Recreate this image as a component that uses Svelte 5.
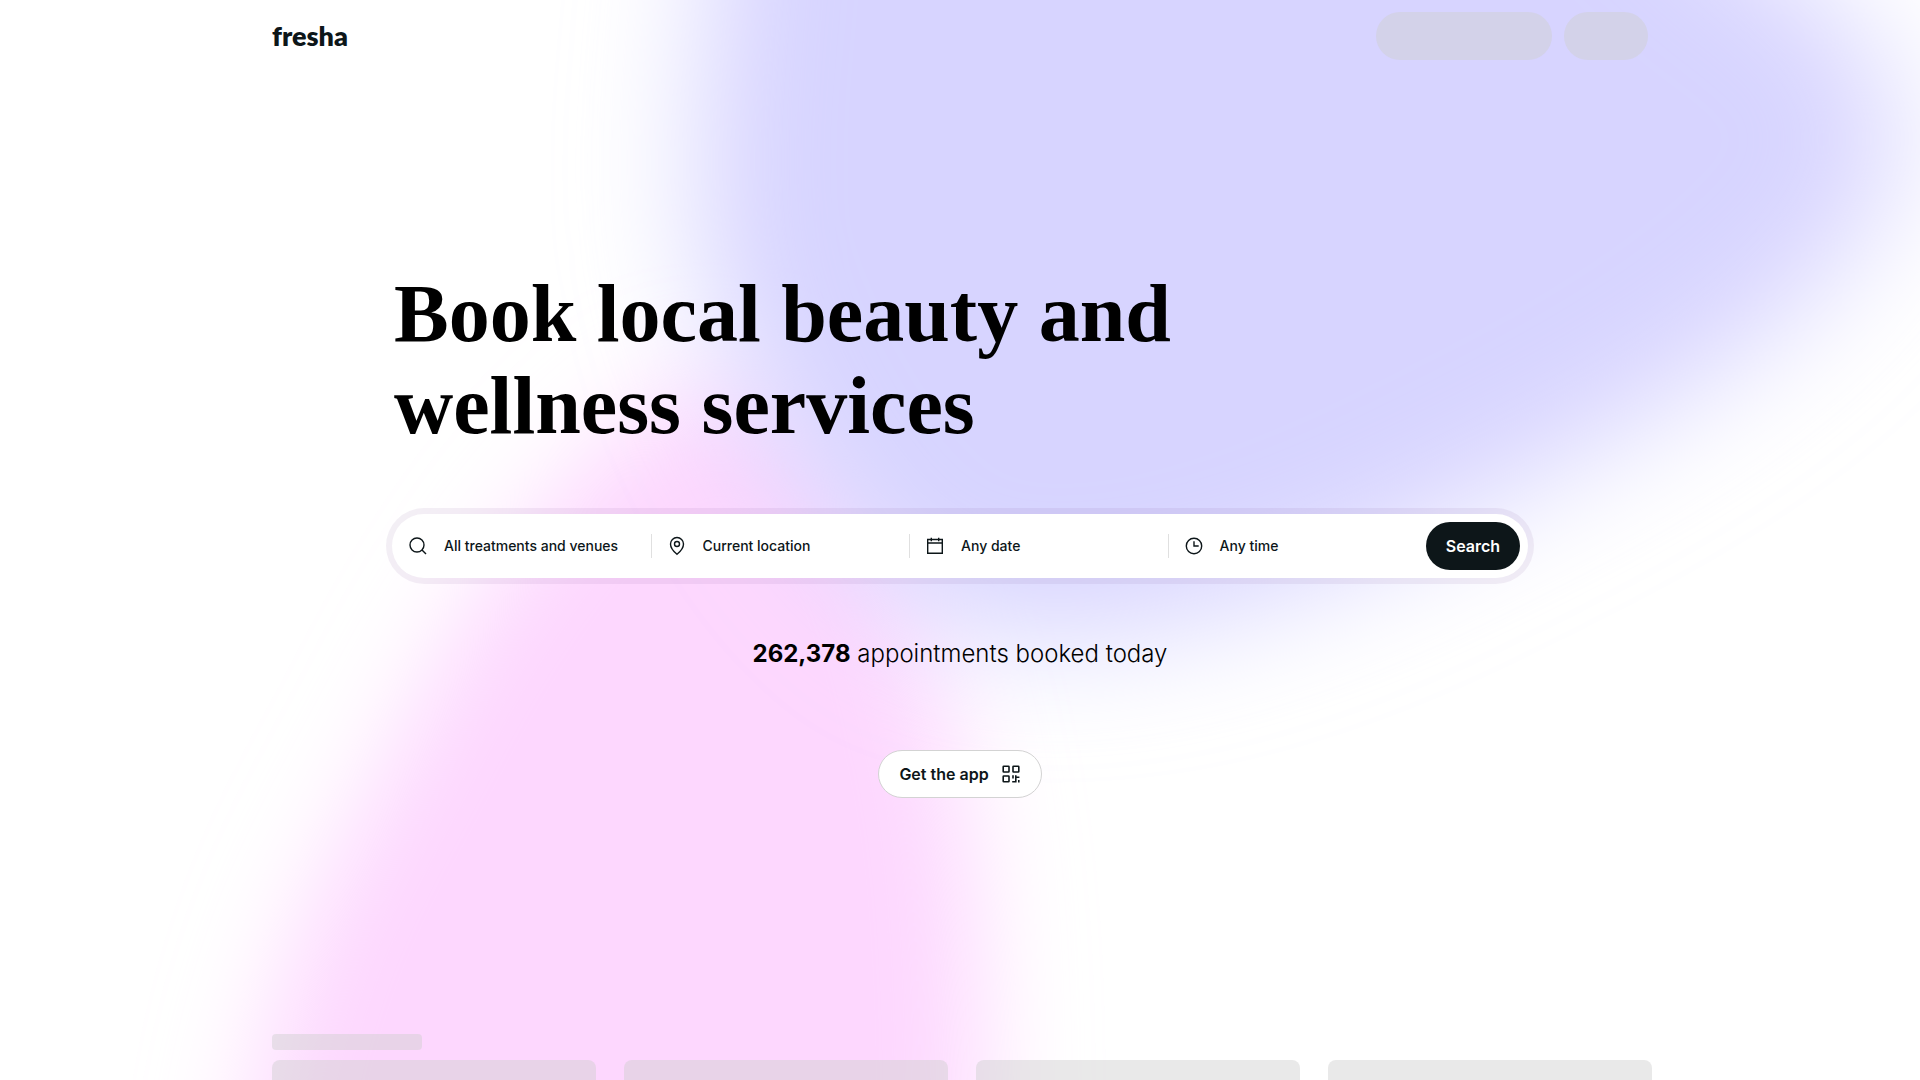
<script lang="ts">
  let treatment = $state('');
  let location = $state('');

  const appointments = 262378;
  const cards = [1, 2, 3, 4];
</script>

<div class="page">
  <svg class="backdrop" viewBox="0 0 1920 1080" preserveAspectRatio="none" aria-hidden="true">
    <defs>
      <filter id="soft" x="-30%" y="-30%" width="160%" height="160%">
        <feGaussianBlur stdDeviation="52" />
      </filter>
      <filter id="softer" x="-30%" y="-30%" width="160%" height="160%">
        <feGaussianBlur stdDeviation="62" />
      </filter>
    </defs>
    <path
      fill="#fdd7fe"
      filter="url(#soft)"
      d="M700 380C610 410 490 560 410 720C340 860 250 960 235 1300L980 1300C982 1100 985 900 955 760C920 620 880 380 700 380Z"
    />
    <path
      fill="#d7d4ff"
      filter="url(#softer)"
      d="M725 -200C720 0 670 200 722 330C765 440 820 550 930 620C1100 670 1300 600 1490 500C1700 400 1880 270 1900 150C1900 70 1850 10 1740 -60L1600 -200Z"
    />
  </svg>

  <header class="header">
    <a class="logo" href="/">fresha</a>
    <div class="header-actions">
      <span class="bone pill wide"></span>
      <span class="bone pill"></span>
    </div>
  </header>

  <main class="hero">
    <h1>Book local beauty and<br />wellness services</h1>

    <form class="search" onsubmit={(e) => e.preventDefault()}>
      <label class="field">
        <svg viewBox="0 0 20 20" aria-hidden="true">
          <circle cx="9" cy="9" r="7" />
          <path d="M14 14L18 18" />
        </svg>
        <input type="text" aria-label="Treatment or venue" placeholder="All treatments and venues" bind:value={treatment} />
      </label>
      <label class="field">
        <svg viewBox="0 0 20 20" aria-hidden="true">
          <circle cx="10" cy="8" r="2.5" />
          <path d="M16.5 8C16.5 13 10 18.3 10 18.3S3.5 13 3.5 8a6.5 6.5 0 0 1 13 0Z" />
        </svg>
        <input type="text" aria-label="Location" placeholder="Current location" bind:value={location} />
      </label>
      <button class="field" type="button">
        <svg viewBox="0 0 20 20" aria-hidden="true">
          <path d="M2.7 3.5h14.6v13.8H2.7ZM2.7 7h14.6M6.3 1.7v3.6M13.7 1.7v3.6" />
        </svg>
        <span>Any date</span>
      </button>
      <button class="field" type="button">
        <svg viewBox="0 0 20 20" aria-hidden="true">
          <circle cx="10" cy="10" r="7.7" />
          <path d="M10 5.3V10h4.7" />
        </svg>
        <span>Any time</span>
      </button>
      <button class="submit" type="submit">Search</button>
    </form>

    <p class="count"><strong>{appointments.toLocaleString('en-US')}</strong> appointments booked today</p>

    <button class="get-app" type="button">
      Get the app
      <svg viewBox="0 0 20 20" aria-hidden="true">
        <rect x="2.2" y="2.2" width="5.8" height="5.8" rx="0.6" />
        <rect x="12" y="2.2" width="5.8" height="5.8" rx="0.6" />
        <rect x="2.2" y="12" width="5.8" height="5.8" rx="0.6" />
        <path d="M12 11.2v3.4M11.2 17.8H14.8V11.2M14.8 13.2H18.4M17.8 16v2.4" />
      </svg>
    </button>
  </main>

  <section class="venues" aria-busy="true">
    <div class="bone title"></div>
    <div class="cards">
      {#each cards as card (card)}
        <div class="bone card"></div>
      {/each}
    </div>
  </section>
</div>

<style>
  :global(body) {
    margin: 0;
    background: #fff;
  }

  .page {
    position: relative;
    height: 100vh;
    overflow: hidden;
    font-family: Inter, 'Liberation Sans', sans-serif;
    color: #0d1619;
  }

  .backdrop {
    position: absolute;
    inset: 0;
    width: 100%;
    height: 100%;
    z-index: -1;
  }

  .header,
  .venues {
    max-width: 1376px;
    margin: 0 auto;
  }

  .header {
    display: flex;
    align-items: center;
    justify-content: space-between;
    height: 72px;
  }

  .logo {
    font-family: Lato, sans-serif;
    font-size: 27px;
    font-weight: 800;
    line-height: 36px;
    color: #0d1619;
    text-decoration: none;
  }

  .header-actions {
    display: flex;
    gap: 12px;
  }

  .bone {
    background: rgba(208, 208, 208, 0.46);
  }

  .pill {
    width: 84px;
    height: 48px;
    border-radius: 24px;
  }

  .pill.wide {
    width: 176px;
  }

  .hero {
    display: flex;
    flex-direction: column;
    align-items: center;
    max-width: 1148px;
    margin: 0 auto;
    padding: 196px 0 236px;
  }

  h1 {
    align-self: flex-start;
    margin: 0 0 56px;
    padding-left: 8px;
    font-family: 'Liberation Serif', serif;
    font-size: 82px;
    font-weight: 700;
    line-height: 92px;
    color: #000;
  }

  .search {
    display: flex;
    align-items: center;
    box-sizing: border-box;
    width: 100%;
    padding-right: 8px;
    border: 6px solid rgba(120, 80, 140, 0.09);
    border-radius: 38px;
    background: #fff;
    background-clip: padding-box;
  }

  .field {
    display: flex;
    flex: 1;
    align-items: center;
    gap: 16px;
    box-sizing: border-box;
    min-width: 0;
    height: 64px;
    padding: 0 0 0 16px;
    border: 0;
    background: linear-gradient(#e0e0e0, #e0e0e0) left center / 1px 24px no-repeat;
    font: 500 14px/20px Inter, sans-serif;
    color: inherit;
    text-align: left;
  }

  .field:first-child {
    background: none;
  }

  .field input {
    flex: 1;
    min-width: 0;
    padding: 0;
    border: 0;
    outline: 0;
    background: none;
    font: inherit;
    color: inherit;
  }

  .field input::placeholder {
    color: #0d1619;
    opacity: 1;
  }

  svg {
    flex: none;
    width: 20px;
    height: 20px;
    fill: none;
    stroke: currentColor;
    stroke-width: 1.4;
  }

  .backdrop path {
    stroke: none;
  }

  .submit {
    width: 94px;
    height: 48px;
    padding: 0;
    border: 0;
    border-radius: 24px;
    background: #0d1619;
    font: 600 16px/24px Inter, sans-serif;
    color: #fff;
  }

  .count {
    margin: 54px 0 80px;
    font-size: 24px;
    font-weight: 300;
    line-height: 32px;
    color: #000;
  }

  .count strong {
    font-weight: 700;
  }

  .get-app {
    display: flex;
    align-items: center;
    gap: 12px;
    height: 48px;
    padding: 0 20px;
    border: 1px solid #d3d3d3;
    border-radius: 24px;
    background: #fff;
    font: 600 16px/24px Inter, sans-serif;
    color: #0d1619;
  }

  .get-app svg {
    stroke-width: 1.6;
  }

  .title {
    width: 150px;
    height: 16px;
    margin-bottom: 10px;
    border-radius: 4px;
  }

  .cards {
    display: flex;
    gap: 28px;
  }

  .card {
    flex: none;
    width: 324px;
    height: 320px;
    border-radius: 8px;
  }
</style>
